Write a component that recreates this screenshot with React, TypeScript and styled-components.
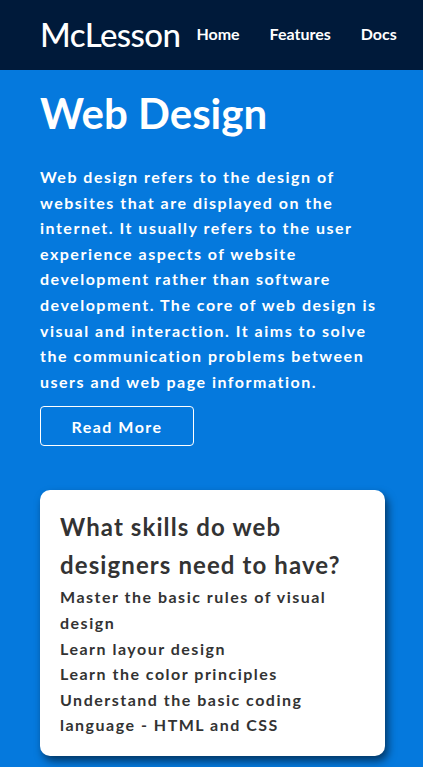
import React from "react";
import styled, { createGlobalStyle } from "styled-components";

const GlobalStyle = createGlobalStyle`
  * { box-sizing: border-box; }
  html, body { margin: 0; padding: 0; background: #ffffff; }
  body { font-family: Lato, "Open Sans", sans-serif; }
`;

const Header = styled.header`
  height: 70px;
  background: #001a3a;
  display: flex;
  align-items: center;
  padding: 0 40px 0 40px;
  gap: 16px;
`;

const Logo = styled.div`
  color: #ffffff;
  font-size: 33px;
  font-weight: 500;
  letter-spacing: -0.6px;
  line-height: 1;
  margin-top: -2px;
`;

const Nav = styled.nav`
  display: flex;
  gap: 30px;
  margin-top: -3px;
`;

const NavLink = styled.a`
  color: #ffffff;
  font-size: 16px;
  font-weight: 700;
  text-decoration: none;
`;

const Hero = styled.main`
  background: #0579dd;
  padding: 18px 38px 11px 40px;
`;

const Title = styled.h1`
  margin: 0;
  color: #ffffff;
  font-size: 42px;
  font-weight: 700;
  line-height: 50px;
`;

const Lead = styled.p`
  margin: 26px 0 12px;
  color: #ffffff;
  font-size: 16px;
  font-weight: 700;
  letter-spacing: 1.5px;
  line-height: 25.6px;
`;

const OutlineButton = styled.button`
  display: block;
  width: 154px;
  height: 40px;
  background: transparent;
  border: 1px solid #ffffff;
  border-radius: 4px;
  color: #ffffff;
  font-family: Lato, sans-serif;
  font-size: 16px;
  font-weight: 700;
  letter-spacing: 1.5px;
  cursor: pointer;
`;

const Card = styled.section`
  margin-top: 44px;
  background: #ffffff;
  border-radius: 10px;
  padding: 18px 20px 18px 20px;
  box-shadow: 3px 5px 8px rgba(0, 0, 0, 0.55);
`;

const CardTitle = styled.h2`
  margin: 0;
  color: #333333;
  font-size: 24px;
  font-weight: 700;
  letter-spacing: 1.1px;
  line-height: 38px;
`;

const SkillList = styled.ul`
  list-style: none;
  margin: 0;
  padding: 0;
`;

const SkillItem = styled.li`
  color: #333333;
  font-size: 16px;
  font-weight: 700;
  letter-spacing: 1.5px;
  line-height: 25.6px;
`;

const skills = [
  "Master the basic rules of visual design",
  "Learn layour design",
  "Learn the color principles",
  "Understand the basic coding language - HTML and CSS",
];

export default function App() {
  return (
    <>
      <GlobalStyle />
      <Header>
        <Logo>McLesson</Logo>
        <Nav>
          <NavLink href="#">Home</NavLink>
          <NavLink href="#">Features</NavLink>
          <NavLink href="#">Docs</NavLink>
        </Nav>
      </Header>
      <Hero>
        <Title>Web Design</Title>
        <Lead>
          Web design refers to the design of websites that are displayed on the
          internet. It usually refers to the user experience aspects of website
          development rather than software development. The core of web design
          is visual and interaction. It aims to solve the communication
          problems between users and web page information.
        </Lead>
        <OutlineButton>Read More</OutlineButton>
        <Card>
          <CardTitle>What skills do web designers need to have?</CardTitle>
          <SkillList>
            {skills.map((s) => (
              <SkillItem key={s}>{s}</SkillItem>
            ))}
          </SkillList>
        </Card>
      </Hero>
    </>
  );
}
